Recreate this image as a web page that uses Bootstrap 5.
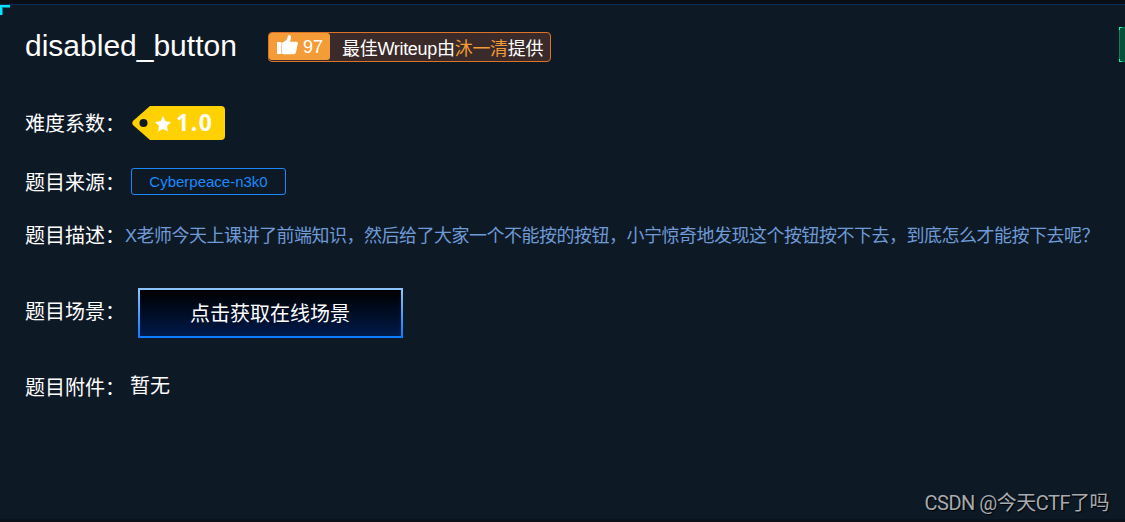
<!DOCTYPE html>
<html lang="zh-CN">
<head>
  <meta charset="UTF-8">
  <title>disabled_button</title>
  <link href="https://cdn.jsdelivr.net/npm/bootstrap@5.3.0/dist/css/bootstrap.min.css" rel="stylesheet">
  <style>
    body {
      background: #0a0f17;
      color: #fff;
      font-family: "Liberation Sans", "Noto Sans CJK SC", sans-serif;
      font-size: 20px;
      line-height: 30px;
      height: 522px;
      overflow: hidden;
    }
    .panel {
      height: 517px;
      margin-top: 4px;
      padding: 22px 0 0 25px;
      background: #0e1926;
      border-top: 1px solid #08305a;
      border-bottom: 2px solid #0a121d;
    }
    /* cyan bracket in the top left corner */
    .corner {
      top: 0;
      left: 0;
      width: 10px;
      height: 10px;
      border-top: 2px solid #00e5ff;
      border-left: 2px solid #00e5ff;
      box-shadow: inset 1px 1px 0 #0b7f92;
    }
    .panel h1 {
      width: 243px;
      padding-top: 1px;
      font-size: 30px;
      font-weight: 400;
      line-height: 36px;
    }
    .writeup {
      height: 30px;
      width: 283px;
      margin-top: 5px;
      background: #3a2a29;
      border: 1px solid #de7326;
      border-radius: 4px;
      font-size: 18px;
      letter-spacing: -.3px;
    }
    .likes {
      width: 61px;
      height: 27px;
      padding-left: 7px;
      background: #f49d38;
      border-radius: 3px;
      letter-spacing: 0;
    }
    .likes-count { margin-left: 4px; line-height: 28px; }
    .writeup-text { padding: 1px 0 0 12px; }
    .author { color: #f39a36; }
    .edge-btn {
      width: 6px;
      height: 35px;
      background: #075039;
      border: 1px solid #078258;
      border-right: 0;
    }
    .edge-btn::before, .edge-btn::after {
      content: "";
      position: absolute;
      left: -1px;
      width: 3px;
      height: 3px;
      border-left: 1px solid #00ff9c;
    }
    .edge-btn::before { top: -1px; border-top: 1px solid #00ff9c; }
    .edge-btn::after { bottom: -1px; border-bottom: 1px solid #00ff9c; }
    .item-label { width: 100px; flex: none; white-space: nowrap; }
    .h-level .item-label, .h-source .item-label { padding-top: 2px; }
    .level-tag { margin-left: 7px; }
    .source {
      width: 155px;
      height: 27px;
      margin-left: 6px;
      border: 1px solid #1989fa;
      border-radius: 3px;
      color: #1989fa;
      font-size: 15px;
    }
    .desc {
      color: #6e9ad6;
      font-size: 18px;
      letter-spacing: -.5px;
      white-space: nowrap;
    }
    .scene-btn {
      width: 265px;
      height: 50px;
      margin-left: 13px;
      padding: 2px 1px 0 0;
      color: #fff;
      font-size: 20px;
      border: 2px solid;
      border-radius: 0;
      border-image: linear-gradient(#8cc5ff, #0a7cff) 1;
      background: linear-gradient(#000, #001a4a);
    }
    .h-scene .item-label { padding-bottom: 2px; }
    .no-file { padding: 0 0 4px 5px; }
    .watermark {
      right: 16px;
      bottom: 1px;
      color: #a7abb0;
      font-family: Roboto, "Noto Sans CJK SC", sans-serif;
      font-size: 20px;
      letter-spacing: -.5px;
      text-shadow: 1px 1px 1px #000;
    }
    .h-title { height: 66px; }
    .h-level { height: 60px; }
    .h-source { height: 57px; }
    .h-desc { height: 51px; }
    .h-scene { height: 103px; }
    .h-file { height: 47px; }
  </style>
</head>
<body>
  <div class="panel position-relative">
    <div class="corner position-absolute"></div>

    <div class="h-title d-flex align-items-start">
      <h1 class="mb-0">disabled_button</h1>
      <div class="writeup d-flex">
        <div class="likes d-flex align-items-start">
          <svg width="23" height="24" viewBox="0 0 23 22" fill="#fff">
            <path d="M1 8h4.500v12H1zM6 19.500V9L10.500 6 12 2C12.600.5 15 .8 15 3.300c0 1.800-.8 3-1 4.400h6.500c1.700 0 2 2 1 3L20 18.300c-.5 1.500-1.400 2-2.800 2H7z"/>
          </svg>
          <span class="likes-count">97</span>
        </div>
        <div class="writeup-text text-nowrap">最佳Writeup由<span class="author">沐一清</span>提供</div>
      </div>
      <div class="edge-btn position-relative ms-auto"></div>
    </div>

    <div class="h-level d-flex align-items-center">
      <div class="item-label">难度系数：</div>
      <svg class="level-tag" width="94" height="34" viewBox="0 0 94 34">
        <path d="M18 0H89Q93 0 93 4V30Q93 34 89 34H18L1.500 19.500Q-1 17 1.500 14.500Z" fill="#ffd100"/>
        <circle cx="11.500" cy="17" r="4" fill="#101a24"/>
        <path d="M31 10l2.500 5.200 5.500.8-4 4 1 5.600-5-2.700-5 2.700 1-5.600-4-4 5.500-.8z" fill="#fff"/>
        <text x="44" y="25" fill="#fff" font-family="Open Sans, sans-serif" font-size="23" font-weight="700" textLength="36">1.0</text>
      </svg>
    </div>

    <div class="h-source d-flex align-items-center">
      <div class="item-label">题目来源：</div>
      <div class="source d-flex align-items-center justify-content-center">Cyberpeace-n3k0</div>
    </div>

    <div class="h-desc d-flex align-items-center">
      <div class="item-label">题目描述：</div>
      <div class="desc">X老师今天上课讲了前端知识，然后给了大家一个不能按的按钮，小宁惊奇地发现这个按钮按不下去，到底怎么才能按下去呢？</div>
    </div>

    <div class="h-scene d-flex align-items-center">
      <div class="item-label">题目场景：</div>
      <button type="button" class="btn scene-btn">点击获取在线场景</button>
    </div>

    <div class="h-file d-flex align-items-center">
      <div class="item-label">题目附件：</div>
      <div class="no-file">暂无</div>
    </div>

    <div class="watermark position-absolute">CSDN @今天CTF了吗</div>
  </div>
  <script src="https://cdn.jsdelivr.net/npm/bootstrap@5.3.0/dist/js/bootstrap.bundle.min.js"></script>
</body>
</html>
